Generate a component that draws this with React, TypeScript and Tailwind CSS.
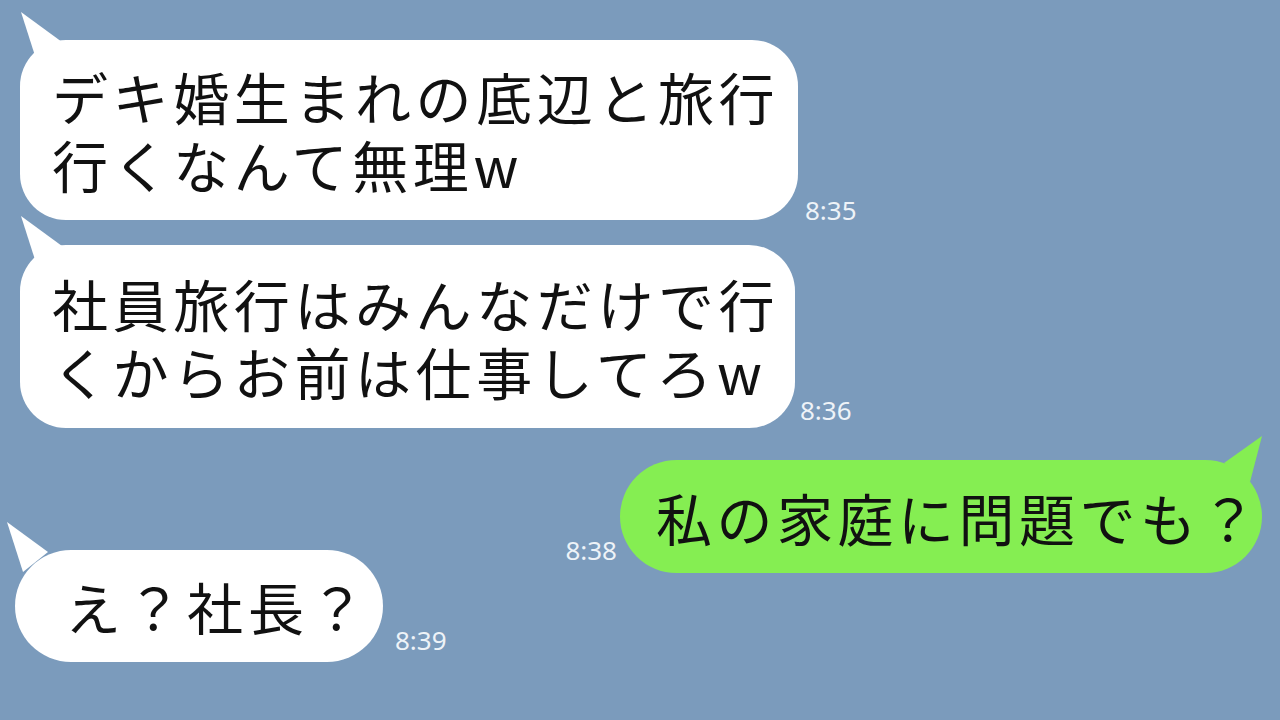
import React from "react";

const JP = "font-['Noto_Sans_CJK_JP','Noto_Sans',sans-serif]";

function TailLeft({ className }: { className: string }) {
  return (
    <svg className={`absolute ${className}`} width="44" height="52" viewBox="0 0 44 52" fill="currentColor">
      <path d="M0 0 L41 30 L16 50 Z" />
    </svg>
  );
}

function Time({ children, className = "" }: { children: React.ReactNode; className?: string }) {
  return (
    <span className={`font-['Noto_Sans',sans-serif] text-[26px] leading-[26px] text-[#eef3f8] whitespace-nowrap ${className}`}>
      {children}
    </span>
  );
}

function Line({ children }: { children: React.ReactNode }) {
  return <span className="block h-[68px] leading-[68px]">{children}</span>;
}

export default function App() {
  return (
    <div className={`w-[1280px] h-[720px] overflow-hidden bg-[#7b9bbc] ${JP} text-[#111]`}>
      <div className="flex flex-col pt-[40px]">
        {/* incoming message 1 */}
        <div className="flex items-end pl-[20px]">
          <div className="relative bg-white text-white rounded-[46px] w-[778px] h-[180px] pl-[32px] pt-[22px]">
            <TailLeft className="left-[1px] top-[-28px]" />
            <div className="relative text-[#111] text-[56px] tracking-[4.6px] whitespace-nowrap">
              <Line>デキ婚生まれの底辺と旅行</Line>
              <Line>行くなんて無理w</Line>
            </div>
          </div>
          <Time className="ml-[7px] mb-[-3px]">8:35</Time>
        </div>

        {/* incoming message 2 */}
        <div className="flex items-end pl-[20px] mt-[25px]">
          <div className="relative bg-white text-white rounded-[46px] w-[775px] h-[183px] pl-[32px] pt-[24px]">
            <TailLeft className="left-[1px] top-[-29px]" />
            <div className="relative text-[#111] text-[56px] tracking-[4.6px] whitespace-nowrap">
              <Line>社員旅行はみんなだけで行</Line>
              <Line>くからお前は仕事してろw</Line>
            </div>
          </div>
          <Time className="ml-[5px] mb-[5px]">8:36</Time>
        </div>

        {/* outgoing message */}
        <div className="flex items-end justify-end pr-[18px] mt-[32px]">
          <Time className="mr-[3px] mb-[10px]">8:38</Time>
          <div className="relative bg-[#85ee52] text-[#85ee52] rounded-full w-[642px] h-[113px] flex items-center pl-[36px]">
            <svg className="absolute right-[0px] top-[-24px]" width="40" height="48" viewBox="0 0 40 48" fill="currentColor">
              <path d="M40 0 L2 27 L28 46 Z" />
            </svg>
            <p className="relative text-[#111] text-[56px] leading-[60px] tracking-[4.5px] whitespace-nowrap">
              私の家庭に問題でも？
            </p>
          </div>
        </div>

        {/* incoming message 3 */}
        <div className="flex items-end pl-[15px] mt-[-23px]">
          <div className="relative bg-white text-white rounded-full w-[368px] h-[112px] flex items-center pl-[50px]">
            <TailLeft className="left-[-8px] top-[-28px]" />
            <p className="relative text-[#111] text-[56px] leading-[60px] tracking-[5px] whitespace-nowrap">
              え？社長？
            </p>
          </div>
          <Time className="ml-[12px] mb-[9px]">8:39</Time>
        </div>
      </div>
    </div>
  );
}
